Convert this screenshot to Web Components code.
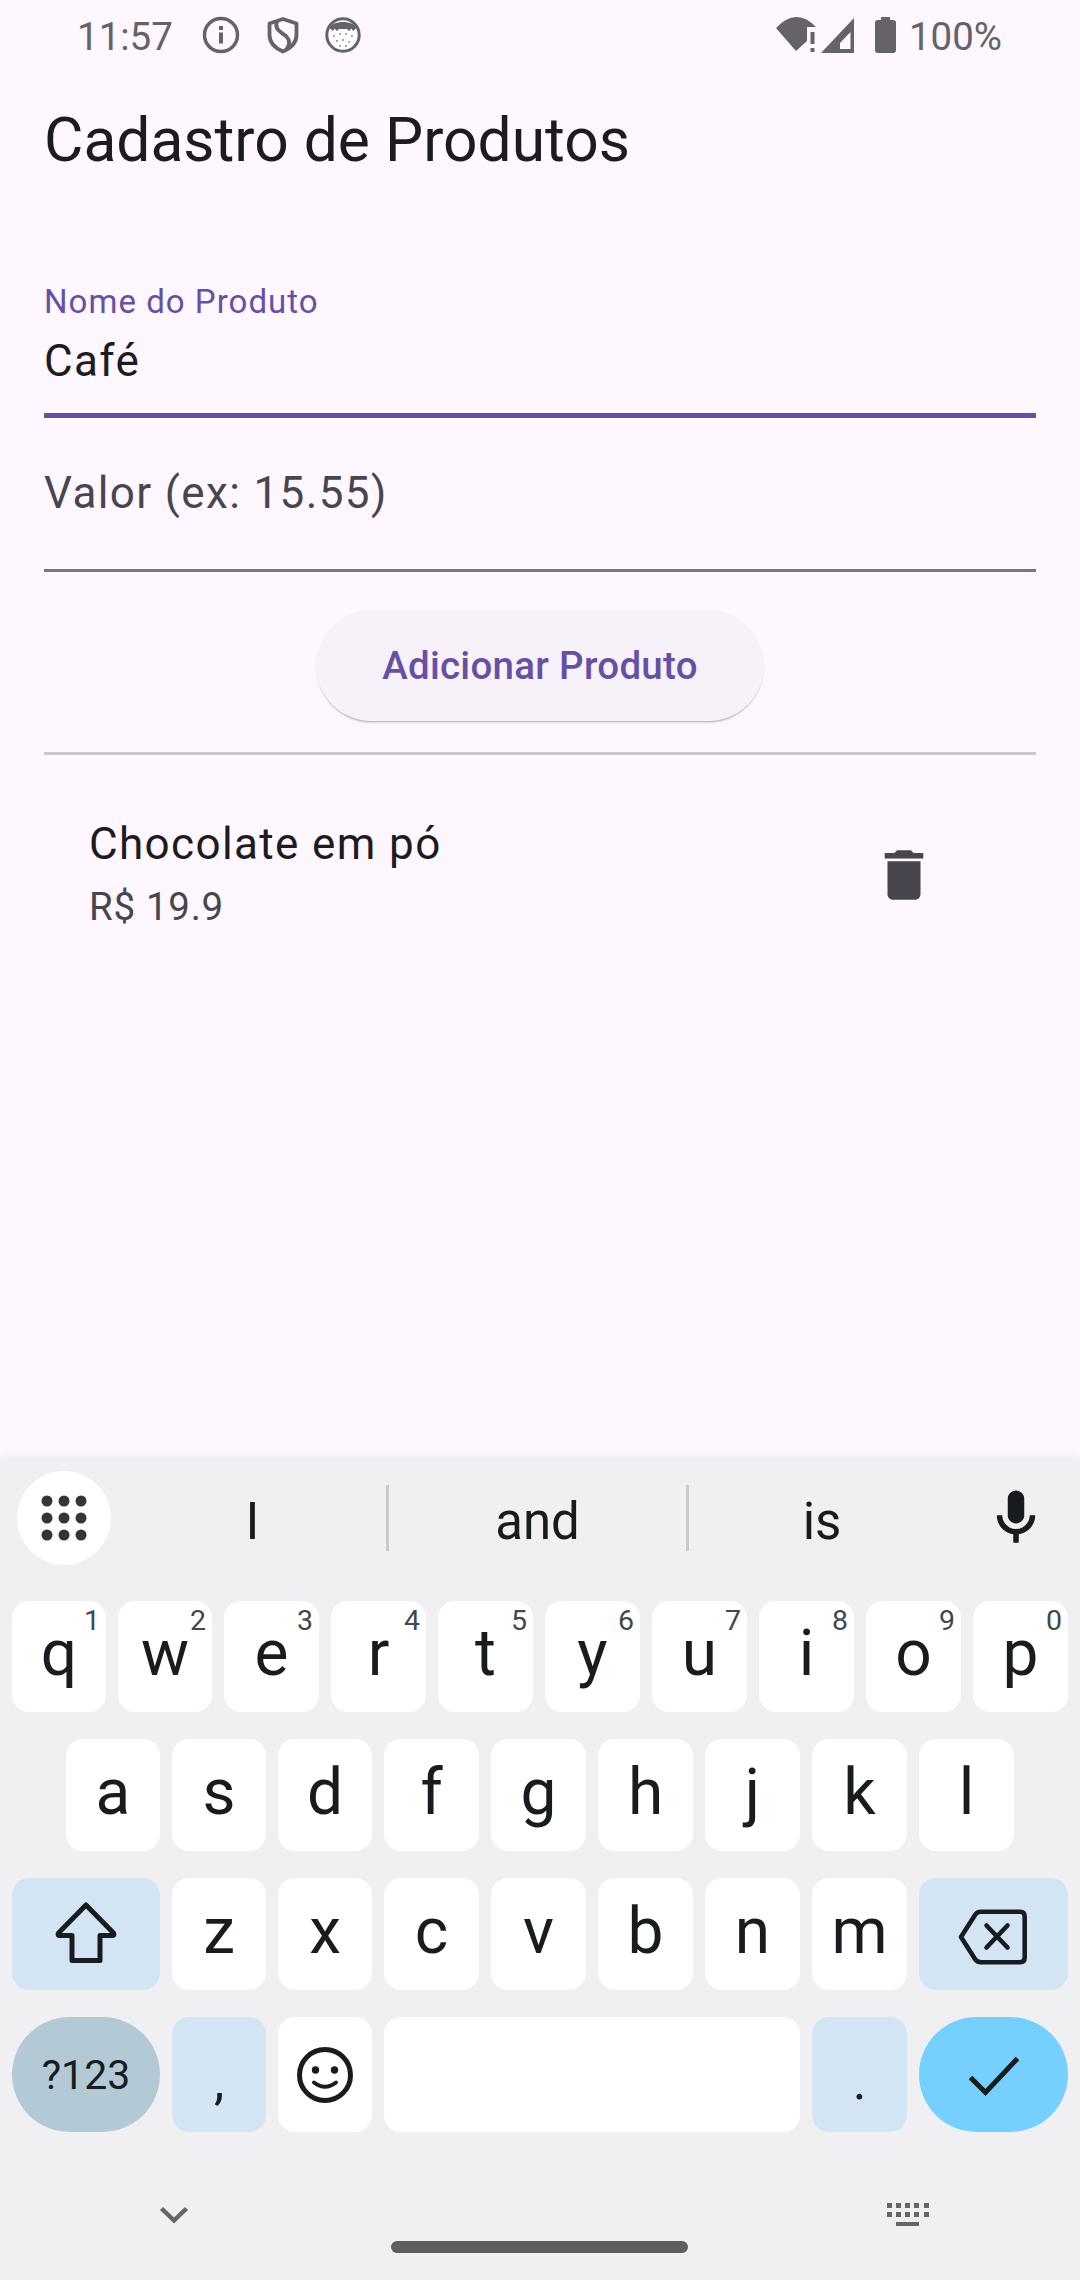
<!DOCTYPE html>
<html lang="pt-BR"><head><meta charset="utf-8"><title>Cadastro de Produtos</title>
<style>
html,body{margin:0;padding:0}
body{width:1080px;height:2280px;overflow:hidden;background:#FEF7FF;font-family:Roboto,"Liberation Sans",sans-serif;color:#1D1B20}
#page{display:flex;flex-direction:column;width:1080px;height:2280px}
</style></head><body>
<div id="page">
<status-bar></status-bar>
<app-header>Cadastro de Produtos</app-header>
<product-form>
  <text-field label="Nome do Produto" value="Café" focused></text-field>
  <text-field placeholder="Valor (ex: 15.55)"></text-field>
  <elevated-button>Adicionar Produto</elevated-button>
  <list-divider></list-divider>
  <product-tile name="Chocolate em pó" price="R$ 19.9"></product-tile>
</product-form>
<soft-keyboard></soft-keyboard>
</div>
<script>
function def(name, html, init){
  customElements.define(name, class extends HTMLElement{
    constructor(){super();this.attachShadow({mode:'open'}).innerHTML=html;}
    connectedCallback(){ if(init) init(this.shadowRoot,this); }
  });
}
const G='#656268';
def('status-bar',`<style>
:host{display:flex;align-items:center;height:70px;padding:0 78px 0 77px;flex:none;color:${G};font:400 38.5px/70px Roboto,sans-serif}
span{padding-top:4px;white-space:nowrap}
svg{display:block;flex:none}
.r{margin-left:auto;display:flex;align-items:center}
</style>
<span>11:57</span>
<svg style="margin-left:28px" width="40" height="40" viewBox="0 0 40 40"><circle cx="20" cy="20" r="16.500" fill="none" stroke="${G}" stroke-width="3.500"/><rect x="18" y="17.500" width="4" height="11" fill="${G}"/><rect x="18" y="11" width="4" height="4" fill="${G}"/></svg>
<svg style="margin-left:26px" width="32" height="38" viewBox="0 0 32 38"><path d="M16 3 L29.500 7.500 V19 C29.500 27 23 32.500 16 35.500 C9 32.500 2.500 27 2.500 19 V7.500 Z" fill="none" stroke="${G}" stroke-width="3.800" stroke-linejoin="round"/><path d="M10 5 C7 14 14 16 19 20 C23 24 23 29 19 34" fill="none" stroke="${G}" stroke-width="3.800"/></svg>
<svg style="margin-left:26px" width="36" height="36" viewBox="0 0 36 36"><circle cx="18" cy="18" r="16.200" fill="#fff" stroke="${G}" stroke-width="3"/><path d="M4.500 11 C8 3 28 3 31.500 11 L28 14 L26.500 11.500 L24 14 L22 12 L14 12 L12 14 L9.500 11.500 L8 14 Z" fill="${G}"/><g fill="#8d8a90"><circle cx="9" cy="19" r="1"/><circle cx="15" cy="17" r="1"/><circle cx="21" cy="17" r="1"/><circle cx="27" cy="19" r="1"/><circle cx="12" cy="24" r="1"/><circle cx="18" cy="23" r="1"/><circle cx="24" cy="25" r="1"/><circle cx="15" cy="29" r="1"/><circle cx="21" cy="29" r="1"/></g></svg>
<div class="r">
<svg width="42" height="36" viewBox="0 0 42 36"><path d="M0 11 Q20 -10.500 40 10 L31 10 V24 L20 34 Z" fill="${G}"/><rect x="34.500" y="15" width="4" height="12" fill="${G}"/><rect x="34.500" y="31" width="4" height="4" fill="${G}"/></svg>
<svg style="margin-left:3px" width="33" height="35" viewBox="0 0 33 35"><path fill-rule="evenodd" d="M0 35 L33 0 V35 Z M19 25 V31 H29.500 V14 Z" fill="${G}"/></svg>
<svg style="margin-left:21px" width="21" height="36" viewBox="0 0 21 36"><path d="M6 0 H15 V3 H18 A3 3 0 0 1 21 6 V33 A3 3 0 0 1 18 36 H3 A3 3 0 0 1 0 33 V6 A3 3 0 0 1 3 3 H6 Z" fill="${G}"/></svg>
<span style="margin-left:13px">100%</span>
</div>`);

def('app-header',`<style>
:host{display:block;flex:none;padding:36px 44px 0;font:400 60.5px/70px Roboto,sans-serif;color:#1D1B20;white-space:nowrap}
</style><slot></slot>`);

def('product-form',`<style>
:host{display:flex;flex-direction:column;flex:1;padding:106px 44px 0;min-height:0}
</style><slot></slot>`);

def('text-field',`<style>
:host{display:block;border-bottom:3px solid #79747E;font-family:Roboto,sans-serif}
:host([focused]){border-bottom:5px solid #6750A4}
.l{font-size:33px;line-height:40px;letter-spacing:1.03px;color:#6750A4;margin-bottom:13px;white-space:nowrap}
.v{font-size:44px;line-height:52px;letter-spacing:1.375px;color:#1D1B20;padding-bottom:26px;white-space:nowrap}
.p{font-size:44px;line-height:52px;letter-spacing:1.375px;color:#49454F;padding:49px 0 50px;white-space:nowrap}
</style><div id="b"></div>`,(r,h)=>{
  const b=r.getElementById('b');
  if(h.hasAttribute('placeholder')){b.innerHTML='<div class="p"></div>';b.firstChild.textContent=h.getAttribute('placeholder');}
  else{b.innerHTML='<div class="l"></div><div class="v"></div>';b.children[0].textContent=h.getAttribute('label');b.children[1].textContent=h.getAttribute('value');}
});

def('elevated-button',`<style>
:host{display:flex;align-self:center;align-items:center;justify-content:center;box-sizing:border-box;width:448px;height:111px;margin-top:38px;padding-top:2px;border-radius:56px;background:#F7F2FA;color:#6750A4;font:500 38.5px/1 Roboto,sans-serif;letter-spacing:.275px;box-shadow:0 3px 3px -2px rgba(0,0,0,.3),0 1px 1px rgba(0,0,0,.06);white-space:nowrap}
</style><slot></slot>`);

def('list-divider',`<style>:host{display:block;height:3px;margin-top:31px;background:#CAC4D0}</style>`);

def('product-tile',`<style>
:host{display:flex;align-items:center;padding:63px 0 0 45px;font-family:Roboto,sans-serif}
.t{flex:1;min-width:0}
.n{font-size:44px;line-height:52px;letter-spacing:1.375px;color:#1D1B20;white-space:nowrap}
.p{font-size:38.5px;line-height:46px;letter-spacing:.69px;color:#49454F;margin-top:14px;white-space:nowrap}
svg{display:block;margin:2px 99px 0 0}
</style><div class="t"><div class="n"></div><div class="p"></div></div>
<svg width="66" height="66" viewBox="0 0 24 24"><path fill="#49454F" d="M6 19c0 1.100.9 2 2 2h8c1.100 0 2-.9 2-2V7H6v12zM19 4h-3.500l-1-1h-5l-1 1H5v2h14V4z"/></svg>`,(r,h)=>{
  r.querySelector('.n').textContent=h.getAttribute('name');
  r.querySelector('.p').textContent=h.getAttribute('price');
});

def('key-cap',`<style>
:host{display:flex;position:relative;flex:none;width:95px;align-items:flex-start;justify-content:center;box-sizing:border-box;background:#fff;border-radius:17px;color:#191C1E;font:400 64px/108px Roboto,sans-serif;height:100%}
:host([n]){width:94px}
:host([hint]){line-height:106px}
:host([c]){align-items:center}
:host([mod]){background:#D3E5F4}
:host([low]){font-size:52px;line-height:130px}
:host([sym]){background:#B3C9D6;border-radius:58px;font-size:41px;line-height:1;padding-top:2px}
:host([act]){background:#75CFFF;border-radius:58px}
b{position:absolute;top:6px;right:6px;font:400 28.500px/28px Roboto,sans-serif;color:#444749}
b:empty{display:none}
</style><slot></slot><b></b>`,(r,h)=>{ r.querySelector('b').textContent=h.getAttribute('hint')||''; });

def('soft-keyboard',`<style>
:host{display:block;flex:none;height:823px;background:#F0F0F3;box-shadow:0 -3px 8px rgba(0,0,0,.035);font-family:Roboto,sans-serif;color:#191C1E}
.strip{display:flex;align-items:flex-start;height:144px;padding:14px 0 0 17px;box-sizing:border-box}
.circle{width:94px;height:94px;border-radius:50%;background:#fff;display:flex;align-items:center;justify-content:center;flex:none;margin-right:8px}
.cell{height:94px;text-align:center;font-size:51px;line-height:102px;flex:none}
.sep{width:3px;height:66px;margin-top:14px;background:#C9CACC;flex:none}
.mic{flex:1;display:flex;justify-content:center;padding:14px 3px 0 0}
.row{display:flex;gap:12px;padding:0 12px;margin-bottom:27px}
svg{display:block;flex:none}
.nav{display:flex;align-items:flex-start}
</style>
<div class="strip">
  <div class="circle"><svg width="48" height="48" viewBox="0 0 48 48" fill="#333537"><circle cx="7" cy="7" r="5.500"/><circle cx="24" cy="7" r="5.500"/><circle cx="41" cy="7" r="5.500"/><circle cx="7" cy="24" r="5.500"/><circle cx="24" cy="24" r="5.500"/><circle cx="41" cy="24" r="5.500"/><circle cx="7" cy="41" r="5.500"/><circle cx="24" cy="41" r="5.500"/><circle cx="41" cy="41" r="5.500"/></svg></div>
  <div class="cell" style="width:267px">I</div><div class="sep"></div>
  <div class="cell" style="width:297px">and</div><div class="sep"></div>
  <div class="cell" style="width:266px">is</div>
  <div class="mic"><svg width="66" height="66" viewBox="0 0 24 24"><path fill="#191C1E" d="M12 14c1.660 0 3-1.340 3-3V5c0-1.660-1.340-3-3-3S9 3.340 9 5v6c0 1.660 1.340 3 3 3zm5-3c0 2.760-2.240 5-5 5s-5-2.240-5-5H5c0 3.530 2.610 6.430 6 6.920V21h2v-3.080c3.390-.49 6-3.390 6-6.920h-2z"/></svg></div>
</div>
<div class="row" style="height:111px">
  <key-cap n hint="1">q</key-cap><key-cap n hint="2">w</key-cap><key-cap hint="3">e</key-cap><key-cap hint="4">r</key-cap><key-cap hint="5">t</key-cap><key-cap hint="6">y</key-cap><key-cap hint="7">u</key-cap><key-cap hint="8">i</key-cap><key-cap hint="9">o</key-cap><key-cap hint="0">p</key-cap>
</div>
<div class="row" style="height:112px;padding:0 66px">
  <key-cap n>a</key-cap><key-cap n>s</key-cap><key-cap n>d</key-cap><key-cap>f</key-cap><key-cap>g</key-cap><key-cap>h</key-cap><key-cap>j</key-cap><key-cap>k</key-cap><key-cap>l</key-cap>
</div>
<div class="row" style="height:112px">
  <key-cap mod c style="width:148px"><svg style="margin-bottom:3px" width="68" height="68" viewBox="0 0 68 68"><path d="M34 6 L6.500 34 Q5 36.500 8 36.500 H20 V61.500 H48 V36.500 H60 Q63 36.500 61.500 34 Z" fill="none" stroke="#191C1E" stroke-width="5" stroke-linejoin="round"/></svg></key-cap>
  <key-cap n>z</key-cap><key-cap n>x</key-cap><key-cap>c</key-cap><key-cap>v</key-cap><key-cap>b</key-cap><key-cap>n</key-cap><key-cap>m</key-cap>
  <key-cap mod c style="width:149px"><svg style="margin:5px 2px 0 0" width="76" height="64" viewBox="0 0 76 64"><path d="M6 32 L20 10 Q22 6.800 26 6.800 H65 Q69.700 6.800 69.700 11.500 V52.500 Q69.700 57.200 65 57.200 H26 Q22 57.200 20 54 Z" fill="none" stroke="#191C1E" stroke-width="4.600" stroke-linejoin="round"/><path d="M31.500 20.500 L52.500 42.500 M52.500 20.500 L31.500 42.500" stroke="#191C1E" stroke-width="4.600" stroke-linecap="round"/></svg></key-cap>
</div>
<div class="row" style="height:115px;margin-bottom:0">
  <key-cap sym c style="width:148px">?123</key-cap>
  <key-cap mod low n>,</key-cap>
  <key-cap c n><svg width="62" height="62" viewBox="0 0 62 62"><circle cx="31" cy="31" r="25.500" fill="none" stroke="#191C1E" stroke-width="5"/><circle cx="21.500" cy="26" r="3.700" fill="#191C1E"/><circle cx="40.500" cy="26" r="3.700" fill="#191C1E"/><path d="M20 38.500 Q31 47 42 38.500" fill="none" stroke="#191C1E" stroke-width="4" stroke-linecap="round"/></svg></key-cap>
  <key-cap style="width:416px"></key-cap>
  <key-cap mod low>.</key-cap>
  <key-cap act c style="width:149px"><svg width="60" height="60" viewBox="0 0 60 60"><path d="M6.500 32.500 L21.500 47.500 L53.500 13.500" fill="none" stroke="#191C1E" stroke-width="5"/></svg></key-cap>
</div>
<div class="nav">
  <svg style="margin:73px 0 0 158px" width="32" height="20" viewBox="0 0 32 20"><path d="M3.500 3.500 L16 15.500 L28.500 3.500" fill="none" stroke="#666" stroke-width="4.500"/></svg>
  <div style="width:297px;height:12px;border-radius:6px;background:#5F5F5F;margin:109px 0 0 201px;flex:none"></div>
  <svg style="margin:71px 0 0 199px" width="42" height="24" viewBox="0 0 42 24" fill="#666"><path d="M0 0h5v5H0zM9 0h5v5H9zM18 0h5v5h-5zM27 0h5v5h-5zM37 0h5v5h-5zM0 9h5v5H0zM9 9h5v5H9zM18 9h5v5h-5zM27 9h5v5h-5zM37 9h5v5h-5zM9 19h23v4H9z"/></svg>
</div>`);
</script>
</body></html>
